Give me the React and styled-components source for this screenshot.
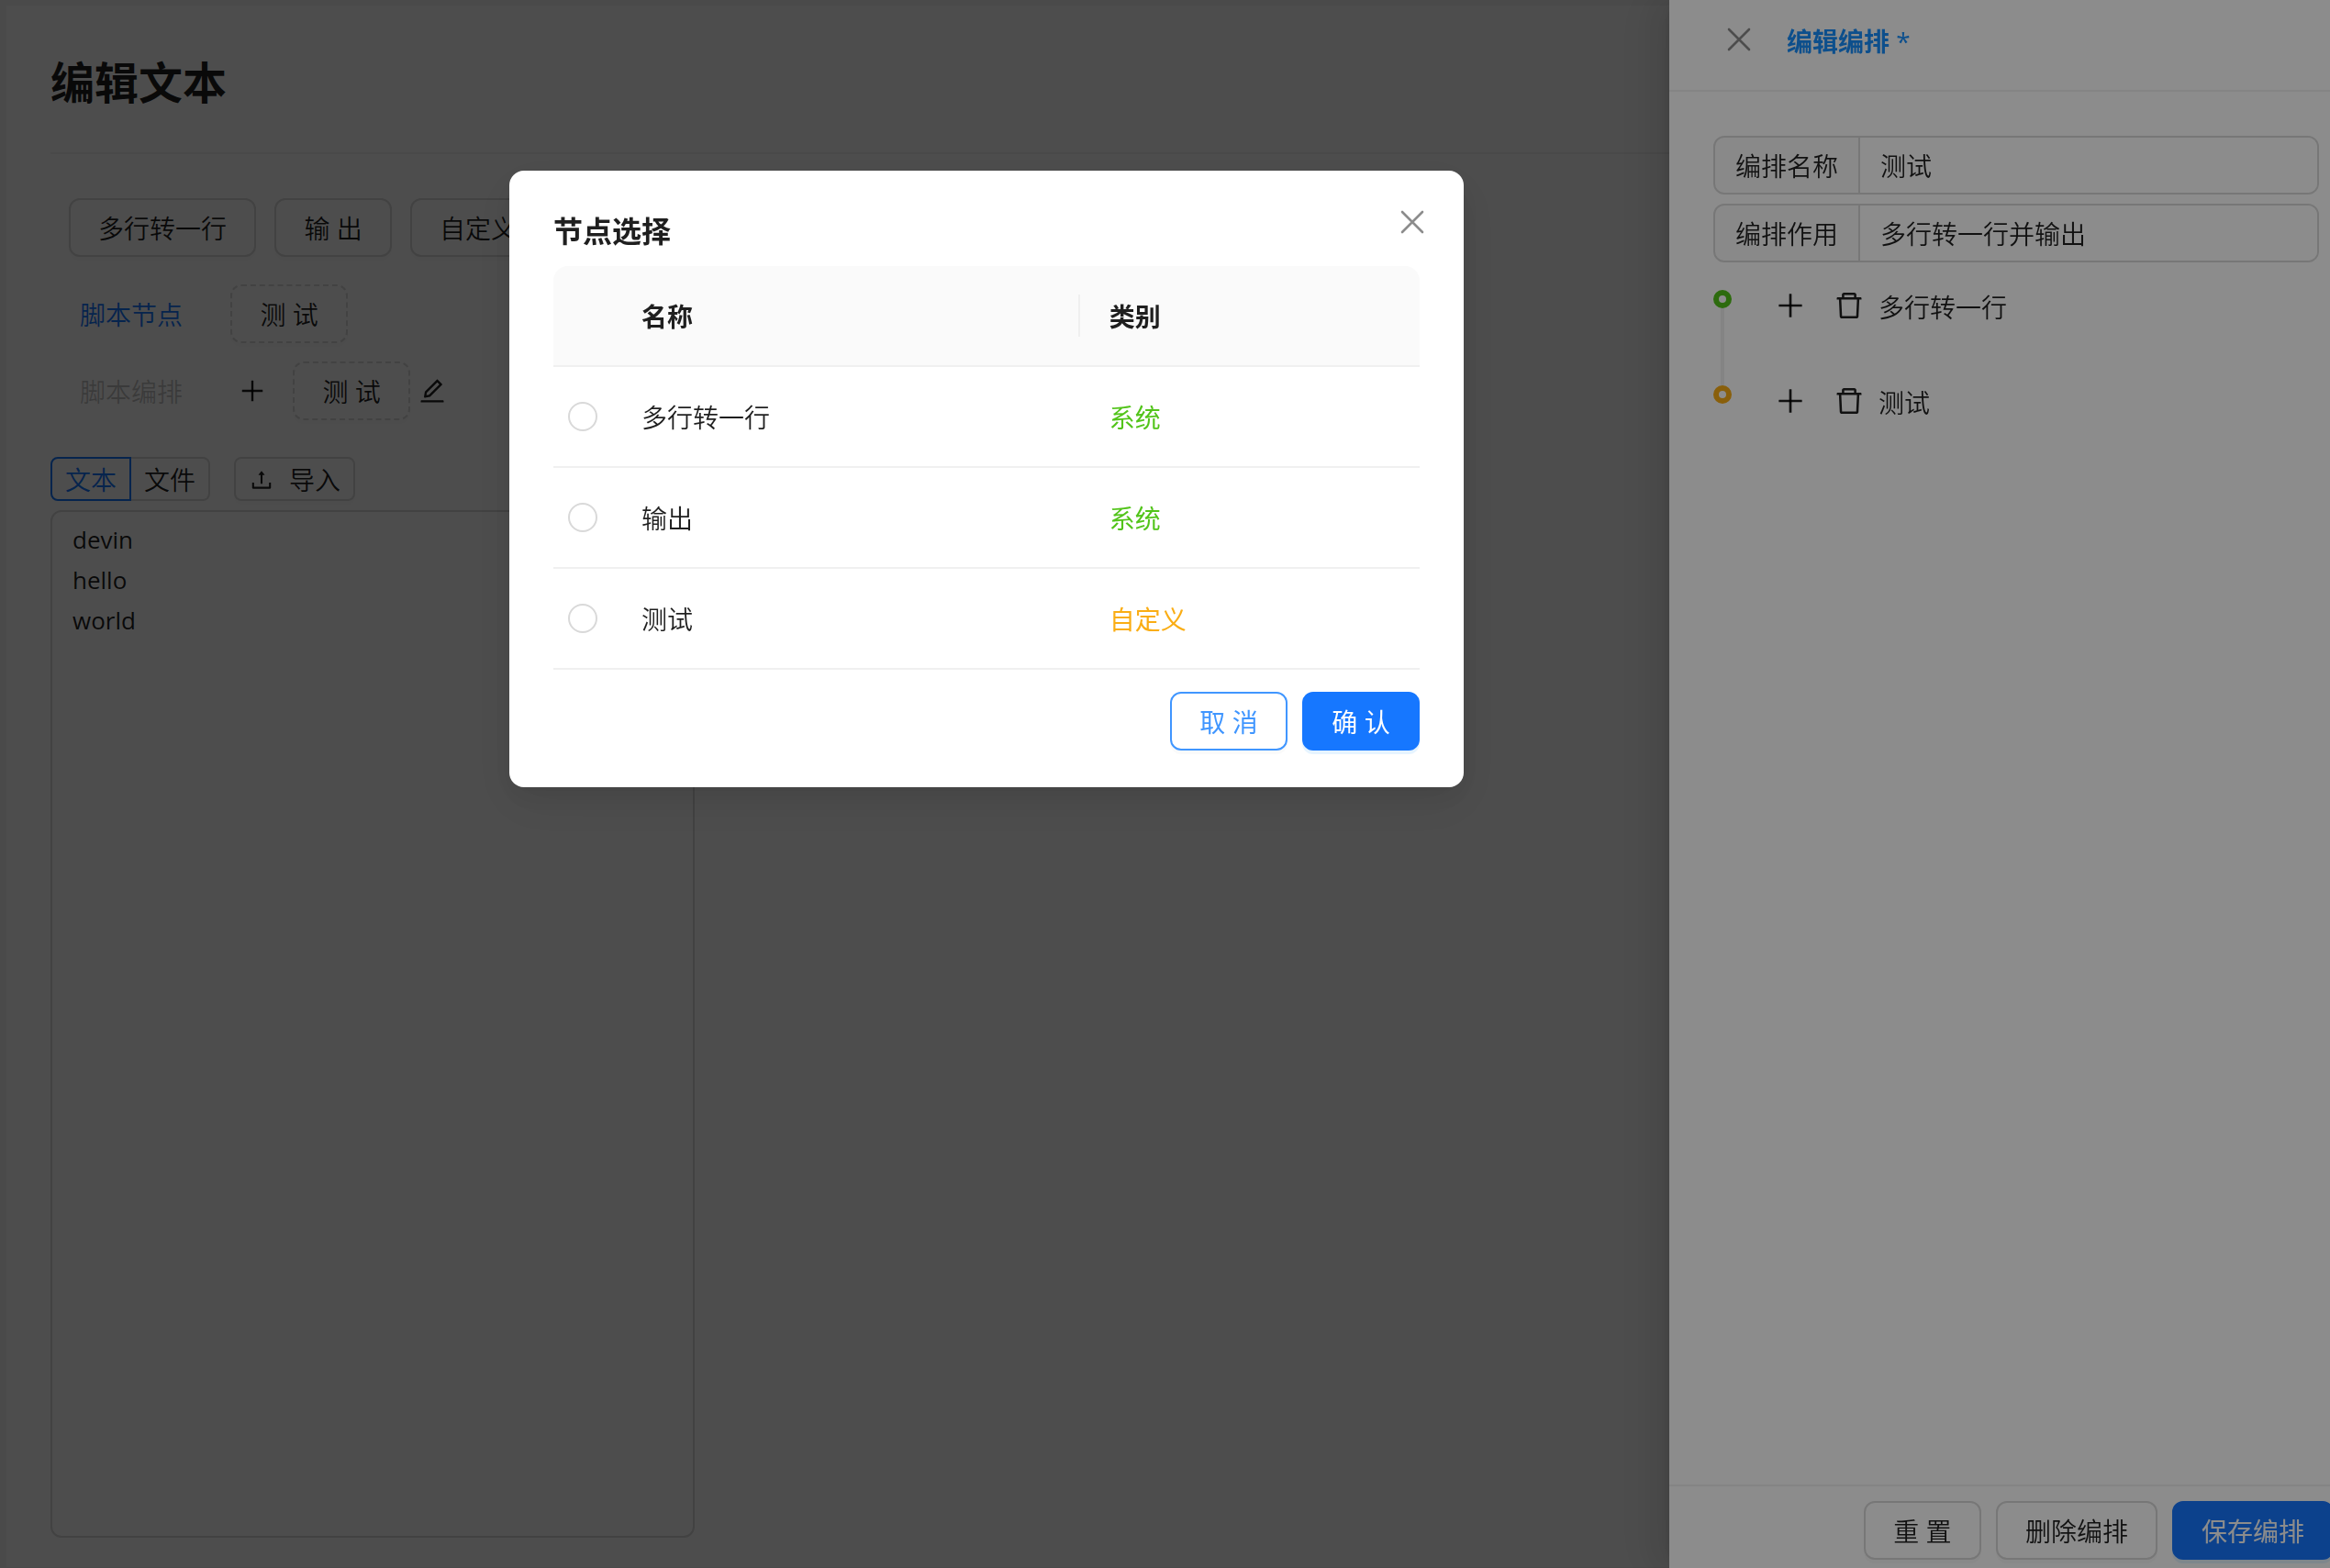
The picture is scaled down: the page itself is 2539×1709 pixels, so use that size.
import React from "react";
import styled, { createGlobalStyle, css } from "styled-components";
import {
  AiOutlineDelete,
  AiOutlineEdit,
  AiOutlinePlus,
  AiOutlineUpload,
} from "react-icons/ai";

const GlobalStyle = createGlobalStyle`
  *, *::before, *::after { box-sizing: border-box; }
  body {
    margin: 0;
    background: #f5f5f5;
    overflow: hidden;
  }
  body, button, input, textarea, table {
    font-family: "Open Sans", "Noto Sans CJK SC", sans-serif;
    font-size: 28px;
    font-weight: 350;
    line-height: 44px;
    color: rgba(0, 0, 0, 0.88);
  }
  svg { display: block; flex: none; }
`;

/* ---------- shared controls ---------- */

const variants = {
  default: css`
    background: #fff;
    border-color: #d9d9d9;
    box-shadow: 0 4px 0 rgba(0, 0, 0, 0.02);
  `,
  dashed: css`
    background: #fff;
    border: 2px dashed #d9d9d9;
    box-shadow: 0 4px 0 rgba(0, 0, 0, 0.02);
  `,
  outline: css`
    background: #fff;
    border-color: #4096ff;
    color: #4096ff;
    font-weight: 400;
    box-shadow: 0 4px 0 rgba(0, 0, 0, 0.02);
  `,
  primary: css`
    background: #1677ff;
    border-color: #1677ff;
    color: #fff;
    font-weight: 400;
    box-shadow: 0 4px 0 rgba(5, 145, 255, 0.1);
  `,
  link: css`
    background: transparent;
    color: #1677ff;
  `,
  disabled: css`
    background: transparent;
    color: rgba(0, 0, 0, 0.25);
  `,
};

const Button = styled.button`
  display: inline-flex;
  align-items: center;
  justify-content: center;
  flex: none;
  gap: 16px;
  min-width: 128px;
  height: ${(p) => (p.$small ? 48 : 64)}px;
  padding: 2px ${(p) => (p.$small ? 14 : 30)}px 0;
  border: 2px solid transparent;
  border-radius: ${(p) => (p.$small ? 8 : 12)}px;
  white-space: nowrap;
  ${(p) => variants[p.$variant || "default"]}
`;

const IconButton = styled.button`
  display: inline-flex;
  align-items: center;
  justify-content: center;
  flex: none;
  width: ${(p) => p.$size}px;
  height: ${(p) => p.$size}px;
  padding: 0;
  border: 0;
  background: transparent;
  color: ${(p) => (p.$muted ? "rgba(0, 0, 0, 0.45)" : "rgba(0, 0, 0, 0.88)")};
`;

const Mask = styled.div`
  position: fixed;
  inset: 0;
  background: rgba(0, 0, 0, 0.45);
`;

const CloseIcon = () => (
  <svg width="36" height="36" viewBox="0 0 36 36" fill="none" stroke="currentColor" strokeWidth="2.6" strokeLinecap="round" aria-hidden="true">
    <path d="M7 7 29 29M29 7 7 29" />
  </svg>
);

/* ---------- page ---------- */

const Page = styled.main`
  display: flex;
  flex-direction: column;
  height: calc(100vh - 7px);
  margin: 6px 7px 1px;
  padding: 0 48px 32px;
  background: #fff;
`;

const PageHeader = styled.header`
  padding: 48px 0 40px;
  border-bottom: 2px solid #f0f0f0;
`;

const PageTitle = styled.h1`
  margin: 0;
  font-size: 48px;
  line-height: 72px;
  font-weight: 700;
`;

const Toolbars = styled.section`
  display: flex;
  flex-direction: column;
  padding: 48px 0 40px;
`;

const Toolbar = styled.div`
  display: flex;
  align-items: center;
  gap: 20px;
  padding-left: ${(p) => (p.$indent ? 20 : 0)}px;
  margin-bottom: ${(p) => p.$after || 0}px;
`;

const Pair = styled.div`
  display: flex;
  align-items: center;
`;

const EditorGrid = styled.section`
  display: grid;
  grid-template-columns: 289fr 711fr;
  flex: 1;
  min-height: 0;
`;

const Editor = styled.div`
  display: flex;
  flex-direction: column;
  gap: 10px;
  min-height: 0;
`;

const EditorBar = styled.div`
  display: flex;
  gap: 26px;
`;

const Segments = styled.div`
  display: flex;
`;

const Segment = styled.label`
  display: flex;
  align-items: center;
  height: 48px;
  padding: 2px 14px 0;
  border: 2px solid #d9d9d9;
  white-space: nowrap;

  &:first-child { border-radius: 8px 0 0 8px; }
  &:last-child { border-left: 0; border-radius: 0 8px 8px 0; }
  &:has(input:checked) { border-color: #1677ff; color: #1677ff; }

  input {
    position: absolute;
    opacity: 0;
    pointer-events: none;
  }
`;

const TextBox = styled.textarea`
  flex: 1;
  width: 100%;
  padding: 8px 22px;
  border: 2px solid #d9d9d9;
  border-radius: 12px;
  font-size: 26px;
  font-weight: 400;
  resize: none;
  outline: none;
`;

/* ---------- drawer ---------- */

const DrawerPanel = styled.aside`
  position: fixed;
  inset: 0 0 0 auto;
  display: flex;
  flex-direction: column;
  width: 720px;
  background: #fff;
  box-shadow: -12px 0 32px 0 rgba(0, 0, 0, 0.08),
    -6px 0 12px -8px rgba(0, 0, 0, 0.12),
    -18px 0 56px 16px rgba(0, 0, 0, 0.05);
`;

const DrawerHeader = styled.header`
  display: flex;
  align-items: center;
  gap: 34px;
  height: 100px;
  padding: 0 48px 12px 58px;
  border-bottom: 2px solid #f0f0f0;
`;

const DrawerTitle = styled.h2`
  margin: 0;
  padding-top: 4px;
  font-size: 28px;
  line-height: 44px;
  font-weight: 700;
  color: #1890ff;

  span { font-weight: 400; }
`;

const DrawerBody = styled.div`
  display: flex;
  flex-direction: column;
  flex: 1;
  gap: 10px;
  padding: 48px 12px 0 48px;
`;

const Field = styled.label`
  display: flex;
  height: 64px;
  border: 2px solid #d9d9d9;
  border-radius: 12px;
  overflow: hidden;
`;

const FieldName = styled.span`
  display: flex;
  align-items: center;
  padding: 2px 22px 0;
  background: rgba(0, 0, 0, 0.02);
`;

const FieldInput = styled.input`
  flex: 1;
  min-width: 0;
  padding: 2px 22px 0;
  border: 0;
  border-left: 2px solid #d9d9d9;
  background: #fff;
  outline: none;
`;

const Timeline = styled.ol`
  margin: 5px 0 0;
  padding: 0;
  list-style: none;
`;

const TimelineItem = styled.li`
  display: flex;
  gap: 32px;
  height: 104px;
`;

const Rail = styled.div`
  display: flex;
  flex-direction: column;
  align-items: center;
  height: 104px;
  width: 20px;
  padding-top: 15px;
  overflow: visible;
`;

const Dot = styled.span`
  flex: none;
  width: 20px;
  height: 20px;
  border: 6px solid ${(p) => p.$color};
  border-radius: 50%;
`;

const RailLine = styled.span`
  flex: none;
  width: 4px;
  height: 84px;
  background: rgba(5, 5, 5, 0.06);
`;

const Step = styled.div`
  display: flex;
  align-items: center;
  height: 64px;
`;

const StepName = styled.span`
  padding-top: 4px;
`;

const DrawerFooter = styled.footer`
  display: flex;
  justify-content: flex-end;
  padding: 16px 0 9px;
  border-top: 2px solid #f0f0f0;
`;

const FooterActions = styled.div`
  display: flex;
  gap: 16px;
  margin-right: -4px;
`;

/* ---------- modal ---------- */

const ModalPanel = styled.div`
  position: fixed;
  top: 186px;
  left: 555px;
  width: 1040px;
  padding: 40px 48px;
  border-radius: 16px;
  background: #fff;
  box-shadow: 0 12px 32px 0 rgba(0, 0, 0, 0.08),
    0 6px 12px -8px rgba(0, 0, 0, 0.12),
    0 18px 56px 16px rgba(0, 0, 0, 0.05);
`;

const ModalTitle = styled.h2`
  margin: 0 0 14px;
  padding-top: 2px;
  font-size: 32px;
  line-height: 48px;
  font-weight: 700;
`;

const ModalClose = styled.div`
  position: absolute;
  top: 34px;
  right: 34px;
`;

const NodeTable = styled.table`
  width: 100%;
  table-layout: fixed;
  border-collapse: separate;
  border-spacing: 0;
`;

const SelectCol = styled.col`
  width: 64px;
`;

const NameCol = styled.col`
  width: 54%;
`;

const HeadCell = styled.th`
  height: 110px;
  padding: 0 ${(p) => (p.$select ? 16 : 32)}px;
  border-bottom: 2px solid #f0f0f0;
  background: #fafafa;
  text-align: left;
  font-weight: 700;

  &:first-child { border-top-left-radius: 16px; }
  &:last-child { border-top-right-radius: 16px; }
`;

const HeadLabel = styled.div`
  padding-top: 2px;
  margin-right: ${(p) => (p.$divided ? -32 : 0)}px;
  border-right: ${(p) => (p.$divided ? "2px solid #f0f0f0" : "0")};
`;

const Cell = styled.td`
  height: 110px;
  padding: ${(p) => (p.$select ? "0 16px" : "2px 32px 0")};
  border-bottom: 2px solid #f0f0f0;
  color: ${(p) => p.$color || "inherit"};
  font-weight: ${(p) => (p.$color ? 400 : 350)};
`;

const Radio = styled.input`
  display: block;
  appearance: none;
  width: 32px;
  height: 32px;
  margin: 0;
  border: 2px solid #d9d9d9;
  border-radius: 50%;
  background: #fff;

  &:checked { border: 10px solid #1677ff; }
`;

const ModalFooter = styled.footer`
  display: flex;
  justify-content: flex-end;
  gap: 16px;
  margin-top: 24px;
`;

const GREEN = "#52c41a";
const ORANGE = "#faad14";

const nodes = [
  { id: "join", name: "多行转一行", kind: "系统", color: GREEN },
  { id: "output", name: "输出", kind: "系统", color: GREEN },
  { id: "test", name: "测试", kind: "自定义", color: ORANGE },
];

const steps = [
  { name: "多行转一行", color: GREEN },
  { name: "测试", color: ORANGE },
];

function TextPage() {
  return (
    <Page>
      <PageHeader>
        <PageTitle>编辑文本</PageTitle>
      </PageHeader>
      <Toolbars>
        <Toolbar $indent $after={30}>
          <Button>多行转一行</Button>
          <Button>输 出</Button>
          <Button>自定义</Button>
        </Toolbar>
        <Toolbar $after={20}>
          <Button $variant="link">脚本节点</Button>
          <Button $variant="dashed">测 试</Button>
        </Toolbar>
        <Toolbar>
          <Button $variant="disabled" disabled>脚本编排</Button>
          <IconButton $size={48} aria-label="新增">
            <AiOutlinePlus size={32} />
          </IconButton>
          <Pair>
            <Button $variant="dashed">测 试</Button>
            <IconButton $size={48} aria-label="编辑">
              <AiOutlineEdit size={32} />
            </IconButton>
          </Pair>
        </Toolbar>
      </Toolbars>
      <EditorGrid>
        <Editor>
          <EditorBar>
            <Segments>
              <Segment>
                <input type="radio" name="source" defaultChecked />
                文本
              </Segment>
              <Segment>
                <input type="radio" name="source" />
                文件
              </Segment>
            </Segments>
            <Button $small>
              <AiOutlineUpload size={28} />
              导入
            </Button>
          </EditorBar>
          <TextBox aria-label="文本" defaultValue={"devin\nhello\nworld"} spellCheck={false} />
        </Editor>
      </EditorGrid>
    </Page>
  );
}

function ArrangeDrawer() {
  return (
    <DrawerPanel>
      <DrawerHeader>
        <IconButton $size={36} $muted aria-label="关闭">
          <CloseIcon />
        </IconButton>
        <DrawerTitle>
          编辑编排 <span>*</span>
        </DrawerTitle>
      </DrawerHeader>
      <DrawerBody>
        <Field>
          <FieldName>编排名称</FieldName>
          <FieldInput type="text" defaultValue="测试" />
        </Field>
        <Field>
          <FieldName>编排作用</FieldName>
          <FieldInput type="text" defaultValue="多行转一行并输出" />
        </Field>
        <Timeline>
          {steps.map((step, i) => (
            <TimelineItem key={step.name}>
              <Rail>
                <Dot $color={step.color} />
                {i < steps.length - 1 && <RailLine />}
              </Rail>
              <Step>
                <IconButton $size={64} aria-label="新增">
                  <AiOutlinePlus size={36} />
                </IconButton>
                <IconButton $size={64} aria-label="删除">
                  <AiOutlineDelete size={36} />
                </IconButton>
                <StepName>{step.name}</StepName>
              </Step>
            </TimelineItem>
          ))}
        </Timeline>
      </DrawerBody>
      <DrawerFooter>
        <FooterActions>
          <Button>重 置</Button>
          <Button>删除编排</Button>
          <Button $variant="primary">保存编排</Button>
        </FooterActions>
      </DrawerFooter>
    </DrawerPanel>
  );
}

function NodeModal() {
  return (
    <ModalPanel role="dialog" aria-labelledby="node-modal-title">
      <ModalTitle id="node-modal-title">节点选择</ModalTitle>
      <ModalClose>
        <IconButton $size={44} $muted aria-label="关闭">
          <CloseIcon />
        </IconButton>
      </ModalClose>
      <NodeTable>
        <colgroup>
          <SelectCol />
          <NameCol />
          <col />
        </colgroup>
        <thead>
          <tr>
            <HeadCell $select />
            <HeadCell>
              <HeadLabel $divided>名称</HeadLabel>
            </HeadCell>
            <HeadCell>
              <HeadLabel>类别</HeadLabel>
            </HeadCell>
          </tr>
        </thead>
        <tbody>
          {nodes.map((node) => (
            <tr key={node.id}>
              <Cell $select>
                <Radio type="radio" name="node" id={node.id} />
              </Cell>
              <Cell>
                <label htmlFor={node.id}>{node.name}</label>
              </Cell>
              <Cell $color={node.color}>{node.kind}</Cell>
            </tr>
          ))}
        </tbody>
      </NodeTable>
      <ModalFooter>
        <Button $variant="outline">取 消</Button>
        <Button $variant="primary">确 认</Button>
      </ModalFooter>
    </ModalPanel>
  );
}

export default function App() {
  return (
    <>
      <GlobalStyle />
      <TextPage />
      <Mask />
      <ArrangeDrawer />
      <Mask />
      <NodeModal />
    </>
  );
}
